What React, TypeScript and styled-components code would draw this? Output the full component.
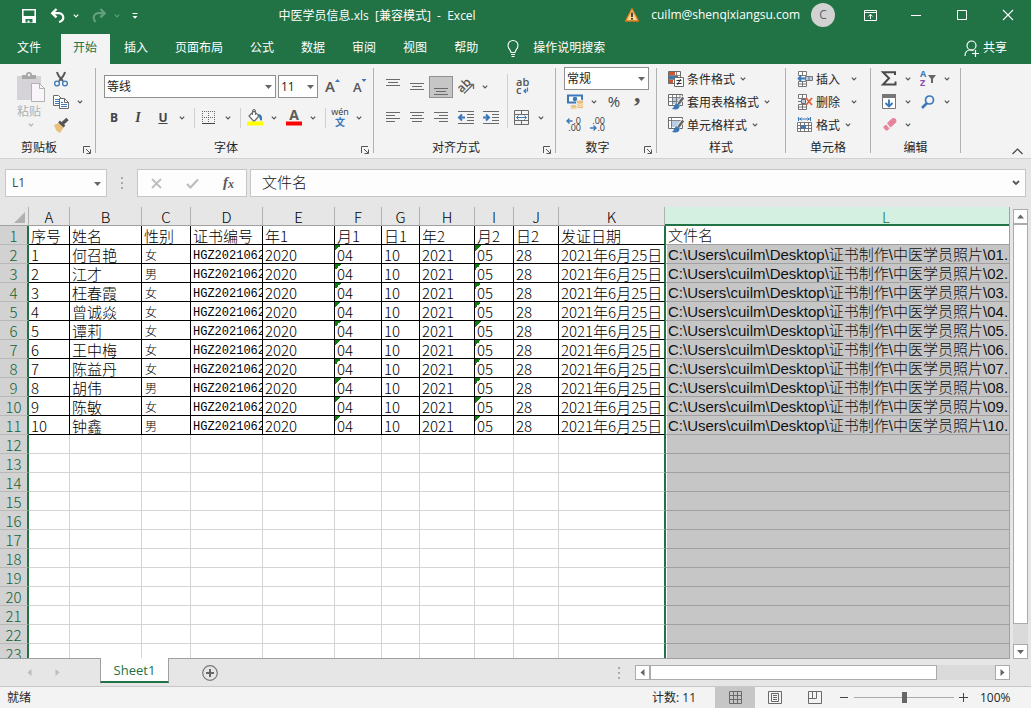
import React from "react";
import styled, { createGlobalStyle, css } from "styled-components";

const GREEN = "#217346";
const UI_FONT = `"Open Sans", "Noto Sans CJK SC", sans-serif`;
const CELL_FONT = `"Noto Sans CJK SC", sans-serif`;

const GlobalStyle = createGlobalStyle`
  *, *::before, *::after { box-sizing: border-box; }
  body { margin: 0; font: 12px/16px ${UI_FONT}; color: #262626; background: #e6e6e6; }
  button, input, select { font: inherit; color: inherit; margin: 0; padding: 0; border: 0; background: none; border-radius: 0; }
  button { cursor: pointer; white-space: nowrap; }
  svg { display: block; flex: none; overflow: visible; }
`;

/* ---------- window frame ---------- */

const Window = styled.div`
  display: flex;
  flex-direction: column;
  height: 100vh;
  overflow: hidden;
`;

const TitleBar = styled.header`
  display: flex;
  align-items: center;
  height: 34px;
  flex: none;
  padding-bottom: 4px;
  background: ${GREEN};
  color: #fff;
`;

const QuickAccess = styled.div`
  display: flex;
  align-items: center;
  gap: 5px;
  width: 140px;
  padding: 2px 0 0 20px;
`;

const QuickPair = styled.div`
  display: flex;
  align-items: center;
`;

const QuickButton = styled.button<{ $w: number; $faded?: boolean }>`
  display: flex;
  flex: none;
  justify-content: center;
  align-items: center;
  width: ${(p) => p.$w}px;
  height: 20px;
  opacity: ${(p) => (p.$faded ? 0.3 : 1)};
`;

const Title = styled.h1`
  flex: 1;
  margin: 0;
  padding: 2px 4px 0 0;
  font-size: 12px;
  font-weight: 400;
  text-align: center;
  white-space: pre;
`;

const Account = styled.div`
  display: flex;
  align-items: center;
  gap: 11px;
  padding: 0 12px 0 6px;
`;

const Avatar = styled.span`
  display: flex;
  align-items: center;
  justify-content: center;
  width: 24px;
  height: 24px;
  border-radius: 50%;
  background: #d2d2d2;
  color: #5b6470;
`;

const WindowButton = styled.button`
  display: flex;
  justify-content: center;
  align-items: center;
  width: 46px;
  height: 30px;
`;

const TabBar = styled.nav`
  display: flex;
  align-items: stretch;
  gap: 2px;
  flex: none;
  height: 30px;
  padding: 0 12px 0 5px;
  background: ${GREEN};
  color: #fff;
`;

const Tab = styled.button<{ $active?: boolean; $file?: boolean }>`
  padding: 0 13px 2px 12px;
  ${(p) => p.$file && css`margin-right: 5px;`}
  ${(p) => p.$active && css`background: #f3f3f3; color: ${GREEN};`}
`;

const TabAction = styled.button<{ $end?: boolean; $gap: number }>`
  display: flex;
  align-items: center;
  gap: ${(p) => p.$gap}px;
  padding: 0 12px 2px 14px;
  margin-left: ${(p) => (p.$end ? "auto" : "0")};
`;

/* ---------- ribbon ---------- */

const Ribbon = styled.section`
  display: flex;
  flex: none;
  height: 95px;
  background: #f3f3f3;
  border-bottom: 1px solid #d2d2d2;
`;

const GroupBox = styled.div<{ $w: number }>`
  display: flex;
  flex-direction: column;
  width: ${(p) => p.$w}px;
`;

const GroupBody = styled.div<{ $left: number }>`
  display: flex;
  height: 73px;
  padding-left: ${(p) => p.$left}px;
`;

const GroupFooter = styled.div`
  display: flex;
  height: 20px;
`;

const GroupLabel = styled.span`
  flex: 1;
  text-align: center;
  line-height: 22px;
`;

const Launcher = styled.button`
  display: flex;
  align-items: flex-end;
  justify-content: center;
  width: 17px;
  padding-bottom: 3px;
`;

const Rule = styled.div`
  width: 1px;
  margin: 4px 0 5px;
  background: #b1b1b1;
`;

const ThreeRows = styled.div`
  display: grid;
  grid-template-rows: repeat(3, 23px);
  align-items: center;
  padding-top: 3px;
`;

const TwoRows = styled.div`
  display: grid;
  grid-template-rows: repeat(2, 31px);
  align-items: center;
  padding-top: 7px;
`;

const Row = styled.div<{ $gap?: number; $left?: number }>`
  display: flex;
  align-items: center;
  gap: ${(p) => p.$gap ?? 0}px;
  padding-left: ${(p) => p.$left ?? 0}px;
`;

const Tool = styled.button<{ $w?: number; $pressed?: boolean }>`
  display: flex;
  align-items: center;
  justify-content: center;
  width: ${(p) => p.$w ?? 24}px;
  height: 22px;
  color: #444;
  ${(p) => p.$pressed && css`background: #c6c6c6; border: 1px solid #919191;`}
`;

const Italic = styled.i`
  font: italic 700 14px/16px "Liberation Serif", serif;
`;

const DropButton = styled.button`
  display: flex;
  align-items: center;
  width: 13px;
  height: 22px;
  padding-left: 3px;
`;

const LabelTool = styled.button`
  display: flex;
  align-items: center;
  gap: 3px;
  height: 22px;
`;

const ToolText = styled.span`
  padding-top: 2px;
`;

const LabelDrop = styled.span`
  padding-left: 2px;
`;

const Divider = styled.span<{ $tall?: boolean }>`
  width: 1px;
  height: ${(p) => (p.$tall ? 54 : 20)}px;
  margin: ${(p) => (p.$tall ? "10px 1px 0 4px" : "0 1px 0 5px")};
  background: #d0d0d0;
`;

const PasteButton = styled.button`
  display: flex;
  flex-direction: column;
  align-items: center;
  width: 34px;
  padding-top: 8px;
  color: #b1b1b1;
`;

const PasteLabel = styled.span`
  height: 21px;
  line-height: 20px;
  margin-right: 4px;
`;

const SelectFrame = styled.span<{ $w: number }>`
  display: grid;
  align-items: center;
  width: ${(p) => p.$w}px;
  height: 23px;
  border: 1px solid #8f8f8f;
  background: #fff;
  & > * { grid-area: 1 / 1; }
  & > svg { justify-self: end; margin-right: 3px; pointer-events: none; }
`;

const SelectField = styled.select`
  appearance: none;
  width: 100%;
  height: 21px;
  padding-left: 2px;
  color: #222;
`;

const CollapseCorner = styled.button`
  display: flex;
  align-self: flex-end;
  padding: 0 8px 3px;
`;

/* ---------- formula bar ---------- */

const FormulaBar = styled.section`
  display: flex;
  flex: none;
  height: 48px;
  padding: 10px 5px 10px 5px;
`;

const Box = styled.div<{ $w?: number }>`
  display: flex;
  align-items: center;
  ${(p) => (p.$w ? css`width: ${p.$w}px;` : css`flex: 1;`)}
  min-width: 0;
  border: 1px solid #c6c6c6;
  background: #fdfdfd;
`;

const NameInput = styled.input`
  flex: 1;
  min-width: 0;
  padding-left: 6px;
  color: #444;
`;

const FormulaInput = styled.input`
  flex: 1;
  min-width: 0;
  padding: 0 0 3px 11px;
  font: 15px/20px ${CELL_FONT};
  font-weight: 300;
  color: #111;
`;

const FxButton = styled.button`
  display: flex;
  align-items: center;
  justify-content: center;
  flex: 1;
  height: 26px;
`;

const ArrowButton = styled.button`
  display: flex;
  align-items: center;
  justify-content: center;
  width: 18px;
  height: 26px;
`;

const Grip = styled.span<{ $w: number }>`
  display: flex;
  align-items: center;
  justify-content: center;
  width: ${(p) => p.$w}px;
`;

/* ---------- worksheet ---------- */

const SheetArea = styled.main`
  display: flex;
  flex: 1;
  min-height: 0;
  gap: 3px;
  padding-right: 3px;
`;

const GridView = styled.div`
  flex: 1;
  min-width: 0;
  overflow: hidden;
  border-right: 1px solid #a0a0a0;
  border-bottom: 1px solid #a0a0a0;
`;

const Sheet = styled.table`
  width: 1108px;
  table-layout: fixed;
  border-collapse: separate;
  border-spacing: 0;
  font: 15px/16px ${CELL_FONT};
  font-weight: 300;
`;

const Corner = styled.td`
  height: 19px;
  padding: 0;
  border-right: 1px solid #b1b1b1;
  border-bottom: 1px solid #a0a0a0;
  background: #e6e6e6;
  & > svg { margin-left: auto; margin-right: 3px; margin-top: 3px; }
`;

const ColHead = styled.th<{ $selected?: boolean }>`
  height: 19px;
  padding: 2px 0 0;
  overflow: hidden;
  font-weight: 300;
  color: #000;
  border-right: 1px solid #b1b1b1;
  border-bottom: 1px solid #a0a0a0;
  background: #e6e6e6;
  ${(p) =>
    p.$selected &&
    css`
      line-height: 15px;
      color: ${GREEN};
      background: #d3f0e0;
      border-right-color: #d3f0e0;
      border-bottom: 2px solid ${GREEN};
    `}
`;

const RowHead = styled.th`
  height: 19px;
  padding: 2px 0 0;
  font-weight: 300;
  color: #0f6335;
  background: #d2d2d2;
  border-right: 2px solid ${GREEN};
  border-bottom: 1px solid #b8b8b8;
`;

type CellKind = "plain" | "mono" | "small";

const Cell = styled.td<{ $filled?: boolean; $kind?: CellKind; $flag?: boolean; $last?: boolean }>`
  height: 19px;
  padding: 2px 0 0 2px;
  overflow: hidden;
  white-space: nowrap;
  background-color: #fff;
  color: #000;
  border-right: 1px solid ${(p) => (p.$filled ? "#000" : "#d4d4d4")};
  border-bottom: 1px solid ${(p) => (p.$filled ? "#000" : "#d4d4d4")};
  ${(p) => p.$last && css`border-right-color: ${GREEN};`}
  ${(p) => p.$kind === "mono" && css`padding-top: 4px; font: 12px/14px "Liberation Mono", monospace;`}
  ${(p) => p.$kind === "small" && css`padding-left: 3px; font-size: 12px;`}
  ${(p) =>
    p.$flag &&
    css`
      background-image: linear-gradient(135deg, #0b7d0b 50%, transparent 50%);
      background-size: 6px 6px;
      background-repeat: no-repeat;
    `}
`;

const SelectedCell = styled.td<{ $current?: boolean }>`
  height: 19px;
  padding: 2px 0 0 2px;
  overflow: hidden;
  white-space: nowrap;
  font-family: "Liberation Sans", "Noto Sans CJK SC", sans-serif;
  color: #111;
  background: ${(p) => (p.$current ? "#fff" : "#c6c6c6")};
  border-left: 1px solid ${GREEN};
  border-bottom: 1px solid #a0a0a0;
  box-shadow: inset 1px 0 #fff;
`;

const VScroll = styled.div`
  display: flex;
  flex-direction: column;
  width: 15px;
  padding-top: 2px;
`;

const HScroll = styled.div`
  display: flex;
  flex: 0 1 375px;
  height: 15px;
`;

const ScrollButton = styled.button`
  display: flex;
  align-items: center;
  justify-content: center;
  flex: none;
  width: 15px;
  height: 15px;
  border: 1px solid #ababab;
  background: #fff;
`;

const ScrollThumb = styled.div<{ $share: number }>`
  flex: ${(p) => p.$share} 1 0;
  border: 1px solid #ababab;
  background: #fff;
`;

const ScrollTrack = styled.div<{ $share: number }>`
  flex: ${(p) => p.$share} 1 0;
  background: #dadada;
`;

/* ---------- sheet tabs and status bar ---------- */

const SheetBar = styled.div`
  display: flex;
  align-items: center;
  flex: none;
  height: 27px;
  padding: 0 21px 0 15px;
`;

const NavButton = styled.button`
  display: flex;
  align-items: center;
  justify-content: center;
  width: 28px;
  height: 20px;
`;

const SheetTab = styled.button`
  position: relative;
  align-self: flex-start;
  width: 69px;
  height: 25px;
  margin: -1px 0 0 29px;
  font-size: 13px;
  color: ${GREEN};
  background: #fff;
  border-left: 1px solid #a0a0a0;
  border-right: 1px solid #a0a0a0;
  border-bottom: 2px solid ${GREEN};
`;

const AddSheet = styled.button`
  display: flex;
  margin-left: 33px;
`;

const Stretch = styled.span`
  flex: 1;
`;

const StatusBar = styled.footer`
  display: flex;
  align-items: center;
  flex: none;
  height: 22px;
  padding: 0 19px 0 7px;
  background: #f3f3f3;
  border-top: 1px solid #c8c8c8;
`;

const Count = styled.span`
  margin-right: 19px;
`;

const ViewButton = styled.button<{ $active?: boolean }>`
  display: flex;
  align-items: center;
  justify-content: center;
  width: 40px;
  height: 21px;
  background: ${(p) => (p.$active ? "#c6c6c6" : "transparent")};
`;

const ZoomButton = styled.button`
  display: flex;
  align-items: center;
  justify-content: center;
  width: 19px;
  height: 21px;
`;

const ZoomRange = styled.input`
  appearance: none;
  width: 100px;
  height: 11px;
  background: linear-gradient(#ababab, #ababab) center / 100% 1px no-repeat;
  &::-webkit-slider-thumb {
    appearance: none;
    width: 5px;
    height: 11px;
    background: #666;
  }
`;

const ZoomValue = styled.button`
  width: 32px;
  margin-left: 7px;
  text-align: left;
`;

/* ---------- icons ---------- */

const G = "#6a6a6a";
const B = "#3b78b8";
const O = "#eabf7d";

type IconProps = { w?: number; h?: number; children: React.ReactNode };
const Icon = ({ w = 16, h = 16, children }: IconProps) => (
  <svg width={w} height={h} viewBox={`0 0 ${w} ${h}`} fill="none" aria-hidden="true">
    {children}
  </svg>
);

const Chevron = ({ color = "#555" }: { color?: string }) => (
  <Icon w={6} h={4}>
    <path d="M.8 .7 3 2.9 5.2 .7" stroke={color} strokeWidth="1.2" />
  </Icon>
);

const Triangle = ({ dir = "down", color = "#666" }: { dir?: "down" | "up" | "left" | "right"; color?: string }) => {
  const d = {
    down: "M0 2h7L3.500 6z",
    up: "M0 5.500h7L3.500 1.500z",
    left: "M5.500 0v7L1.500 3.500z",
    right: "M1.500 0v7L5.500 3.500z",
  }[dir];
  return (
    <Icon w={7} h={7}>
      <path d={d} fill={color} />
    </Icon>
  );
};

const SaveIcon = () => (
  <Icon>
    <path d="M1.800 1.800h12.400v12.400H1.800z" stroke="#fff" strokeWidth="1.600" />
    <path d="M2 8h12v6H2z" fill="#fff" />
    <path d="M4.500 11h7v3.500h-7z" fill={GREEN} />
    <path d="M6.500 12.500h2v2h-2z" fill="#fff" />
  </Icon>
);

const UndoIcon = () => (
  <Icon>
    <path d="M6.500 1 2.300 5.200l4.200 4.200" stroke="#fff" strokeWidth="2.400" />
    <path d="M2.500 5.200H9a4.300 4.300 0 0 1 4.300 4.300c0 2.300-1.600 3.800-4.300 4.500" stroke="#fff" strokeWidth="2.200" />
  </Icon>
);

const RedoIcon = () => (
  <Icon>
    <path d="m9.500 1 4.200 4.200-4.200 4.200" stroke="#fff" strokeWidth="2.400" />
    <path d="M13.500 5.200H7a4.300 4.300 0 0 0-4.300 4.300c0 1.800.8 3.300 1.800 4.500" stroke="#fff" strokeWidth="2.200" />
  </Icon>
);

const CustomizeIcon = () => (
  <Icon w={6} h={8}>
    <path d="M.5 1.500h5" stroke="#fff" />
    <path d="M.5 4h5L3 6.800z" fill="#fff" />
  </Icon>
);

const WarningIcon = () => (
  <Icon>
    <path d="M8 1.500 14.500 14h-13z" fill="#f8d58b" stroke="#d8761b" strokeWidth="1.300" strokeLinejoin="round" />
    <path d="M8 5.500v4.500M8 11v1.800" stroke="#222" strokeWidth="1.600" />
  </Icon>
);

const RibbonOptionsIcon = () => (
  <Icon w={13} h={11}>
    <path d="M.5 .5h12v10H.5zM.5 2.500h12M6.500 9V4.500M4.300 6.500l2.200-2.200 2.200 2.200" stroke="#fff" />
  </Icon>
);

const MinimizeIcon = () => (
  <Icon w={10} h={10}>
    <path d="M0 5.500h10" stroke="#fff" />
  </Icon>
);

const MaximizeIcon = () => (
  <Icon w={10} h={10}>
    <path d="M.5 .5h9v9h-9z" stroke="#fff" />
  </Icon>
);

const CloseIcon = () => (
  <Icon w={10} h={10}>
    <path d="m0 0 10 10M10 0 0 10" stroke="#fff" strokeWidth="1.100" />
  </Icon>
);

const BulbIcon = () => (
  <Icon w={12} h={17}>
    <path d="M4 12.500c0-2.500-3-3.500-3-7a5 5 0 0 1 10 0c0 3.500-3 4.500-3 7zM4 14.500h4M4.500 16.500h3" stroke="#fff" strokeWidth="1.100" />
  </Icon>
);

const ShareIcon = () => (
  <Icon w={15} h={17}>
    <path d="M1 16c0-4 2-6 5.500-6 1.500 0 2.500.4 3 .9" stroke="#fff" strokeWidth="1.200" />
    <circle cx="7.500" cy="5.500" r="4.500" stroke="#fff" strokeWidth="1.200" />
    <path d="M8 13.500h7M11.500 10v7" stroke="#fff" strokeWidth="1.200" />
  </Icon>
);

const PasteIcon = () => (
  <Icon w={28} h={30}>
    <path d="M0 4h24v24H0z" fill="#d6d3d8" />
    <path d="M5 3h4a3 3 0 0 1 6 0h4v4H5z" fill="#a8a8a8" />
    <circle cx="12" cy="3" r="1.200" fill="#f3f3f3" />
    <path d="M14.500 11.500h8l5 5v13h-13z" fill="#faf5fb" stroke="#b1b1b1" />
    <path d="M22.500 11.500v5h5" stroke="#b1b1b1" />
  </Icon>
);

const CutIcon = () => (
  <Icon>
    <path d="M4 1c1 4 3 6 6 9M12 1c-1 4-3 6-6 9" stroke="#555" strokeWidth="2" />
    <circle cx="4" cy="12.500" r="2.400" stroke={B} strokeWidth="1.300" />
    <circle cx="12" cy="12.500" r="2.400" stroke={B} strokeWidth="1.300" />
  </Icon>
);

const CopyIcon = () => (
  <Icon>
    <path d="M.500 1.500h5l3 3v7h-8z" fill="#fff" stroke={G} />
    <path d="M2 5.500h4M2 7.500h4M2 9.500h4" stroke={B} />
    <path d="M6.500 4.500h5l4 4v6h-9z" fill="#fff" stroke={G} />
    <path d="M11.500 4.500v4h4" stroke={G} />
    <path d="M8 8.500h2M8 10.500h6M8 12.500h6" stroke={B} />
  </Icon>
);

const BrushIcon = () => (
  <Icon>
    <path d="m1 8 5-2 5 4-4 6-2-1-1-1-1-1z" fill={O} />
    <path d="m6 4.500 5.500 5" stroke="#555" strokeWidth="2.500" />
    <path d="m9 7 5.500-5" stroke="#555" strokeWidth="3.500" />
  </Icon>
);

const LauncherIcon = () => (
  <Icon w={8} h={8}>
    <path d="M.500 7V.500H7M3 3l4 4M7.500 3.500v4h-4" stroke="#555" />
  </Icon>
);

const FontSizeIcon = ({ grow }: { grow?: boolean }) => (
  <Icon>
    <text x={grow ? 0 : 1} y="13" fontSize={grow ? 15 : 13} fontWeight="600" fill="#555">A</text>
    <path d={grow ? "M10 3h5l-2.500-3z" : "M9.500 0h5L12 3z"} fill={B} />
  </Icon>
);

const BorderIcon = () => (
  <Icon w={14} h={14}>
    <path d="M.500 0v12M6.500 0v12M12.500 0v12M0 .500h13M0 6.500h13" stroke={G} strokeDasharray="1 1" />
    <path d="M0 12.500h13" stroke="#444" />
  </Icon>
);

const FillIcon = () => (
  <Icon w={16} h={17}>
    <path d="M2 7 7 2l5 5-5 5.500z" fill="#fff" stroke={G} strokeWidth="1.200" />
    <path d="M5.500 6V2a1.500 1.500 0 0 1 3 0v4" stroke={G} />
    <path d="M11 5c3 0 4.500 2 4 6-1 1-2 .5-2-.5z" fill={B} />
    <path d="M0 12.500h16v4H0z" fill="#ff0" />
  </Icon>
);

const FontColorIcon = () => (
  <Icon w={16} h={17}>
    <text x="8" y="11" fontSize="14" fontWeight="700" textAnchor="middle" fill="#5a5a5a">A</text>
    <path d="M0 12.500h16v4H0z" fill="#f00" />
  </Icon>
);

const PhoneticIcon = () => (
  <Icon w={18} h={18}>
    <text x="9" y="6" fontSize="9" textAnchor="middle" fill="#333">wén</text>
    <text x="9" y="17" fontSize="10" fontWeight="700" textAnchor="middle" fill={B}>文</text>
  </Icon>
);

const LinesIcon = ({ rows, y = 0 }: { rows: [number, number][]; y?: number }) => (
  <Icon w={14} h={16}>
    {rows.map(([x, w], i) => (
      <path key={i} d={`M${x} ${y + i * 3 + 0.5}h${w}`} stroke={G} />
    ))}
  </Icon>
);

const OrientationIcon = () => (
  <Icon w={17} h={17}>
    <text x="1" y="13" fontSize="12" fontWeight="600" fill="#555" transform="rotate(-45 5 11)">ab</text>
    <path d="m6 15.500 9-9M11 6.500h4.500V11" stroke={G} strokeWidth="1.300" />
  </Icon>
);

const WrapIcon = () => (
  <Icon w={14} h={18}>
    <text x="1" y="8" fontSize="11" fontWeight="600" fill="#555">ab</text>
    <text x="1" y="16" fontSize="11" fontWeight="600" fill="#555">c</text>
    <path d="M12.500 9.500v3.500H9M11 11l-2 2 2 2" stroke={B} strokeWidth="1.200" />
  </Icon>
);

const IndentIcon = ({ out }: { out?: boolean }) => (
  <Icon>
    <path d="M0 1.500h16M9 4.500h7M9 7.500h7M9 10.500h7M0 13.500h16" stroke={G} />
    <path
      d={out ? "M7 7.500H1.500M4 4.500l-3 3 3 3" : "M0 7.500h5.500M3 4.500l3 3-3 3"}
      stroke={B}
      strokeWidth="2"
    />
  </Icon>
);

const MergeIcon = () => (
  <Icon>
    <path d="M.500 .500h14v14H.500zM.500 4.500h14M.500 10.500h14M7.500 .500v4M7.500 10.500v4" stroke={G} />
    <path d="M3 7.500h9M4.500 5.500l-2 2 2 2M10.500 5.500l2 2-2 2" stroke={B} />
  </Icon>
);

const CurrencyIcon = () => (
  <Icon w={17} h={16}>
    <path d="M1 1.500h14v7H1z" fill="#fff" stroke={B} strokeWidth="2" />
    <circle cx="8" cy="5" r="2.300" fill={B} />
    <path d="M9.500 7.500c0-2 7-2 7 0v6c0 1.500-7 1.500-7 0z" fill={O} stroke="#f3f3f3" strokeWidth=".8" />
    <path d="M3.500 12c0-1.800 6.500-1.800 6.500 0v2.500c0 1.500-6.500 1.500-6.500 0z" fill={O} stroke="#f3f3f3" strokeWidth=".8" />
    <path d="M10 9.500c1 1 5 1 6 0M10 11.500c1 1 5 1 6 0M4 13.500c1 1 5 1 6 0" stroke="#fff" strokeWidth=".7" />
  </Icon>
);

const DecimalIcon = ({ more }: { more?: boolean }) => (
  <Icon w={16} h={16}>
    <text x="15" y="7" fontSize="9" textAnchor="end" fill="#333">{more ? ".0" : ".00"}</text>
    <text x="15" y="14" fontSize="9" textAnchor="end" fill="#333">{more ? ".00" : ".0"}</text>
    <path
      d={more ? "M6.500 4H1M3.500 1.500 1 4l2.500 2.500" : "M0 11h5.500M3.500 8.500 6 11l-2.500 2.500"}
      stroke={B}
      strokeWidth="1.400"
    />
  </Icon>
);

const CondFormatIcon = () => (
  <Icon>
    <path d="M.500 .500h12v12H.500z" fill="#fff" stroke={G} />
    <path d="M1 1h6v3H1zM1 9h4v3H1z" fill="#d35230" />
    <path d="M1 5h9v3H1z" fill={B} />
    <path d="M.500 4.500h12M.500 8.500h6M8.500 .500v6" stroke={G} strokeWidth=".8" />
    <path d="M6.500 6.500h9v9h-9z" fill="#fff" stroke={G} />
    <path d="M8.500 9.500h5M8.500 12.500h5M12.500 8l-3 6" stroke="#333" />
  </Icon>
);

const StyleIcon = ({ grid }: { grid?: boolean }) => (
  <Icon>
    <path d="M.500 .500h14v11H.500z" fill="#fff" stroke={G} />
    <path d={grid ? "M4 4h8v6H4z" : "M3 4h9v6H3z"} fill="#b9cde4" />
    <path d={grid ? "M.500 3.500h14M.500 7.500h14M4.500 .500v11M8.500 .500v11M12 .500v11" : "M.500 3.500h14M3.500 .500v11"} stroke={G} strokeWidth=".8" />
    <path d="M15.500 3 10 10.500" stroke="#f3f3f3" strokeWidth="4" />
    <path d="M15.200 3.500 10.500 10" stroke="#666" strokeWidth="2.500" />
    <path d="M8 9.500c2-.5 4 1.500 3.500 3.500-1 2.500-4 3-7.500 2 2-1 2-4.500 4-5.500z" fill={B} />
  </Icon>
);

const CellsIcon = ({ remove }: { remove?: boolean }) => (
  <Icon>
    <path d="M1.500 .500h8v4h-8zM5.500 .500v4M1.500 10.500h8v5h-8zM5.500 10.500v5M1.500 13h8" fill="#fff" stroke={G} strokeWidth=".9" />
    {remove ? (
      <>
        <path d="M1 7.500h3" stroke={G} />
        <path d="M4.500 5.500h4v4h-4z" fill="#b9cde4" stroke={G} />
        <path d="m9 4 6 7M15 4l-6 7" stroke="#e0603c" strokeWidth="1.800" />
      </>
    ) : (
      <>
        <path d="M8.500 5.500h7v4h-7zM12 5.500v4" fill="#b9cde4" stroke={G} strokeWidth=".9" />
        <path d="M8 7.500H1.500M4 5 1.500 7.500 4 10" stroke={B} strokeWidth="1.800" />
      </>
    )}
  </Icon>
);

const FormatIcon = () => (
  <Icon>
    <path d="M1.500 0v4M13.500 0v4M2 2h11M4.500 .500 3 2l1.500 1.500M10.500 .500 12 2l-1.500 1.500" stroke={B} />
    <path d="M.500 5.500h14v9H.500zM.500 8.500h14M.500 11.500h14M3.500 5.500v9M11.500 5.500v9M7.500 5.500v9" fill="#fff" stroke={G} strokeWidth=".9" />
    <path d="M4 8.500h5v3.500H4z" fill={B} />
  </Icon>
);

const SumIcon = () => (
  <Icon w={16} h={15}>
    <path d="M14 4V1.200H2l6 6-6 6.300h12.500V10.500" stroke="#4a4a4a" strokeWidth="2" />
  </Icon>
);

const FillDownIcon = () => (
  <Icon w={15} h={16}>
    <path d="M.500 .500h13v14H.500z" fill="#fff" stroke="#777" />
    <path d="M0 0h14v4H0z" fill="#777" />
    <path d="M7 5.500V12M3.500 9 7 12.500 10.500 9" stroke={B} strokeWidth="1.900" />
  </Icon>
);

const EraserIcon = () => (
  <Icon w={15} h={15}>
    <path d="m5.500 6 5-4.500 3 .5.500 3L8.500 10z" fill="#e6849a" stroke="#e6849a" strokeLinejoin="round" />
    <path d="m4 7.500 3.500 4-2 2H4L1.500 11V9.500z" fill="#e6849a" />
  </Icon>
);

const SortIcon = () => (
  <Icon w={17} h={17}>
    <text x="0" y="7" fontSize="9" fontWeight="700" fill={B}>A</text>
    <text x="0" y="16" fontSize="9" fontWeight="700" fill="#8a4fae">Z</text>
    <path d="M8 5h8l-3 4v4h-2V9z" fill="#666" />
  </Icon>
);

const FindIcon = () => (
  <Icon w={14} h={14}>
    <circle cx="8.500" cy="5" r="4" stroke={B} strokeWidth="1.700" />
    <path d="M6 8 1 13" stroke={B} strokeWidth="2.600" />
  </Icon>
);

const CollapseIcon = () => (
  <Icon w={11} h={7}>
    <path d="M.500 6 5.500 1l5 5" stroke="#444" strokeWidth="1.200" />
  </Icon>
);

const GripIcon = () => (
  <Icon w={2} h={12}>
    <path d="M0 1h2M0 6h2M0 11h2" stroke="#aaa" strokeWidth="2" />
  </Icon>
);

const CancelIcon = () => (
  <Icon w={11} h={11}>
    <path d="m1 1 9 9M10 1l-9 9" stroke="#bdbdbd" strokeWidth="1.800" />
  </Icon>
);

const EnterIcon = () => (
  <Icon w={13} h={11}>
    <path d="m1 6 3.500 3.500L12 1.500" stroke="#bdbdbd" strokeWidth="2.200" />
  </Icon>
);

const FxIcon = () => (
  <Icon w={12} h={16}>
    <text x="1" y="12" fontSize="15" fontStyle="italic" fontWeight="700" fontFamily="Liberation Serif, serif" fill="#5a5a5a">f</text>
    <text x="6" y="13" fontSize="12" fontStyle="italic" fontWeight="700" fontFamily="Liberation Serif, serif" fill="#5a5a5a">x</text>
  </Icon>
);

const AddIcon = () => (
  <Icon w={16} h={16}>
    <circle cx="8" cy="8" r="7.300" stroke="#777" strokeWidth="1.200" />
    <path d="M4 8h8M8 4v8" stroke="#666" strokeWidth="2" />
  </Icon>
);

const NormalViewIcon = () => (
  <Icon w={13} h={13}>
    <path d="M.500 .500h12v12H.500zM.500 4.500h12M.500 8.500h12M4.500 .500v12M8.500 .500v12" stroke={G} />
  </Icon>
);

const PageLayoutIcon = () => (
  <Icon w={14} h={13}>
    <path d="M.500 .500h13v12H.500zM3.500 2.500h7v8h-7zM5 4.500h4M5 6.500h4M5 8.500h4" stroke={G} />
  </Icon>
);

const PageBreakIcon = () => (
  <Icon w={14} h={13}>
    <path d="M.500 .500h13v12H.500zM.500 7.500h8v-7M4.500 .500v7" stroke={G} />
  </Icon>
);

/* ---------- composed parts ---------- */

const Split = ({ label, children }: { label: string; children: React.ReactNode }) => (
  <>
    <Tool $w={26} aria-label={label}>{children}</Tool>
    <DropButton aria-label={`${label} 选项`}><Chevron /></DropButton>
  </>
);

const Combo = ({ label, value, w }: { label: string; value: string; w: number }) => (
  <SelectFrame $w={w}>
    <SelectField aria-label={label} defaultValue={value}>
      <option>{value}</option>
    </SelectField>
    <Triangle />
  </SelectFrame>
);

type GroupProps = { label: string; w: number; left?: number; launcher?: boolean; children: React.ReactNode };
const Group = ({ label, w, left = 0, launcher, children }: GroupProps) => (
  <>
    <GroupBox $w={w}>
      <GroupBody $left={left}>{children}</GroupBody>
      <GroupFooter>
        <GroupLabel>{label}</GroupLabel>
        {launcher && <Launcher aria-label={`${label}设置`}><LauncherIcon /></Launcher>}
      </GroupFooter>
    </GroupBox>
    <Rule />
  </>
);

const MenuTool = ({ icon, label }: { icon: React.ReactNode; label: string }) => (
  <LabelTool>
    {icon}
    <ToolText>{label}</ToolText>
    <LabelDrop><Chevron /></LabelDrop>
  </LabelTool>
);

const SplitLabelTool = ({ icon, label }: { icon: React.ReactNode; label: string }) => (
  <Row $gap={8}>
    <LabelTool>
      {icon}
      <ToolText>{label}</ToolText>
    </LabelTool>
    <DropButton aria-label={`${label}选项`}><Chevron /></DropButton>
  </Row>
);

/* ---------- data ---------- */

const MENU = ["插入", "页面布局", "公式", "数据", "审阅", "视图", "帮助"];

const COLUMNS: { id: string; w: number }[] = [
  { id: "A", w: 41 },
  { id: "B", w: 72 },
  { id: "C", w: 49 },
  { id: "D", w: 72 },
  { id: "E", w: 72 },
  { id: "F", w: 47 },
  { id: "G", w: 38 },
  { id: "H", w: 55 },
  { id: "I", w: 39 },
  { id: "J", w: 45 },
  { id: "K", w: 106 },
  { id: "L", w: 443 },
];

const HEADINGS = ["序号", "姓名", "性别", "证书编号", "年1", "月1", "日1", "年2", "月2", "日2", "发证日期"];

const STUDENTS: [string, string][] = [
  ["何召艳", "女"],
  ["江才", "男"],
  ["枉春霞", "女"],
  ["曾诚焱", "女"],
  ["谭莉", "女"],
  ["王中梅", "女"],
  ["陈益丹", "女"],
  ["胡伟", "男"],
  ["陈敏", "女"],
  ["钟鑫", "男"],
];

const RECORDS = STUDENTS.map(([name, sex], i) => ({
  cells: [String(i + 1), name, sex, "HGZ2021062", "2020", "04", "10", "2021", "05", "28", "2021年6月25日"],
  file: `C:\\Users\\cuilm\\Desktop\\证书制作\\中医学员照片\\${String(i + 1).padStart(2, "0")}.`,
}));

const KINDS: Record<number, CellKind> = { 2: "small", 3: "mono" };
const FLAGGED = [5, 8];
const EMPTY_ROWS = Array.from({ length: 12 }, (_, i) => i + 12);

export default function App() {
  return (
    <Window>
      <GlobalStyle />
      <TitleBar>
        <QuickAccess>
          <QuickButton $w={18} aria-label="保存"><SaveIcon /></QuickButton>
          <QuickPair>
            <QuickButton $w={30} aria-label="撤消"><UndoIcon /></QuickButton>
            <QuickButton $w={6} aria-label="撤消列表"><Chevron color="#fff" /></QuickButton>
          </QuickPair>
          <QuickPair>
            <QuickButton $w={30} $faded aria-label="恢复"><RedoIcon /></QuickButton>
            <QuickButton $w={6} $faded aria-label="恢复列表"><Chevron color="#fff" /></QuickButton>
          </QuickPair>
          <QuickButton $w={20} aria-label="自定义快速访问工具栏"><CustomizeIcon /></QuickButton>
        </QuickAccess>
        <Title>中医学员信息.xls  [兼容模式]  -  Excel</Title>
        <Account>
          <WarningIcon />
          <span>cuilm@shenqixiangsu.com</span>
          <Avatar>C</Avatar>
        </Account>
        <WindowButton aria-label="功能区显示选项"><RibbonOptionsIcon /></WindowButton>
        <WindowButton aria-label="最小化"><MinimizeIcon /></WindowButton>
        <WindowButton aria-label="最大化"><MaximizeIcon /></WindowButton>
        <WindowButton aria-label="关闭"><CloseIcon /></WindowButton>
      </TitleBar>

      <TabBar>
        <Tab $file>文件</Tab>
        <Tab $active>开始</Tab>
        {MENU.map((m) => <Tab key={m}>{m}</Tab>)}
        <TabAction $gap={14}><BulbIcon />操作说明搜索</TabAction>
        <TabAction $gap={4} $end><ShareIcon />共享</TabAction>
      </TabBar>

      <Ribbon>
        <Group label="剪贴板" w={95} left={14} launcher>
          <PasteButton>
            <PasteIcon />
            <PasteLabel>粘贴</PasteLabel>
            <Chevron color="#b1b1b1" />
          </PasteButton>
          <ThreeRows>
            <Tool $w={26} aria-label="剪切"><CutIcon /></Tool>
            <Row><Split label="复制"><CopyIcon /></Split></Row>
            <Tool $w={26} aria-label="格式刷"><BrushIcon /></Tool>
          </ThreeRows>
        </Group>

        <Group label="字体" w={277} left={6} launcher>
          <TwoRows>
            <Row $gap={2} $left={2}>
              <Combo label="字体" value="等线" w={172} />
              <Combo label="字号" value="11" w={40} />
              <Tool $w={26} aria-label="增大字号"><FontSizeIcon grow /></Tool>
              <Tool aria-label="减小字号"><FontSizeIcon /></Tool>
            </Row>
            <Row>
              <Tool aria-label="加粗"><b>B</b></Tool>
              <Tool aria-label="倾斜"><Italic>I</Italic></Tool>
              <Split label="下划线"><b><u>U</u></b></Split>
              <Divider />
              <Split label="边框"><BorderIcon /></Split>
              <Divider />
              <Split label="填充颜色"><FillIcon /></Split>
              <Split label="字体颜色"><FontColorIcon /></Split>
              <Divider />
              <Split label="拼音字段"><PhoneticIcon /></Split>
            </Row>
          </TwoRows>
        </Group>

        <Group label="对齐方式" w={181} left={7} launcher>
          <TwoRows>
            <Row>
              <Tool aria-label="顶端对齐"><LinesIcon y={0} rows={[[0, 14], [2, 10], [0, 14]]} /></Tool>
              <Tool aria-label="垂直居中"><LinesIcon y={4} rows={[[0, 14], [2, 10], [0, 14]]} /></Tool>
              <Tool aria-label="底端对齐" $pressed><LinesIcon y={9} rows={[[0, 14], [2, 10], [0, 14]]} /></Tool>
              <Split label="方向"><OrientationIcon /></Split>
            </Row>
            <Row>
              <Tool aria-label="左对齐"><LinesIcon y={2} rows={[[0, 14], [0, 9], [0, 14], [0, 9]]} /></Tool>
              <Tool aria-label="居中"><LinesIcon y={2} rows={[[0, 14], [2, 10], [0, 14], [2, 10]]} /></Tool>
              <Tool aria-label="右对齐"><LinesIcon y={2} rows={[[0, 14], [5, 9], [0, 14], [5, 9]]} /></Tool>
              <Tool $w={26} aria-label="减少缩进量"><IndentIcon out /></Tool>
              <Tool aria-label="增加缩进量"><IndentIcon /></Tool>
            </Row>
          </TwoRows>
          <Divider $tall />
          <TwoRows>
            <Tool $w={26} aria-label="自动换行"><WrapIcon /></Tool>
            <Row><Split label="合并后居中"><MergeIcon /></Split></Row>
          </TwoRows>
        </Group>

        <Group label="数字" w={100} left={6} launcher>
          <ThreeRows>
            <Row $left={2}><Combo label="数字格式" value="常规" w={85} /></Row>
            <Row>
              <Split label="会计数字格式"><CurrencyIcon /></Split>
              <Tool $w={26} aria-label="百分比样式">
                <Icon><text x="8" y="13" fontSize="15" textAnchor="middle" fill="#444">%</text></Icon>
              </Tool>
              <Tool $w={22} aria-label="千位分隔样式">
                <Icon w={8} h={16}><text x="0" y="8" fontSize="26" fontWeight="700" fontFamily="Liberation Serif, serif" fill="#555">,</text></Icon>
              </Tool>
            </Row>
            <Row>
              <Tool aria-label="增加小数位数"><DecimalIcon more /></Tool>
              <Tool aria-label="减少小数位数"><DecimalIcon /></Tool>
            </Row>
          </ThreeRows>
        </Group>

        <Group label="样式" w={128} left={11}>
          <ThreeRows>
            <MenuTool icon={<CondFormatIcon />} label="条件格式" />
            <MenuTool icon={<StyleIcon grid />} label="套用表格格式" />
            <MenuTool icon={<StyleIcon />} label="单元格样式" />
          </ThreeRows>
        </Group>

        <Group label="单元格" w={84} left={11}>
          <ThreeRows>
            <SplitLabelTool icon={<CellsIcon />} label="插入" />
            <SplitLabelTool icon={<CellsIcon remove />} label="删除" />
            <MenuTool icon={<FormatIcon />} label="格式" />
          </ThreeRows>
        </Group>

        <Group label="编辑" w={89} left={5}>
          <ThreeRows>
            <Row>
              <Split label="自动求和"><SumIcon /></Split>
              <Split label="排序和筛选"><SortIcon /></Split>
            </Row>
            <Row>
              <Split label="填充"><FillDownIcon /></Split>
              <Split label="查找和选择"><FindIcon /></Split>
            </Row>
            <Row><Split label="清除"><EraserIcon /></Split></Row>
          </ThreeRows>
        </Group>
        <Stretch />
        <CollapseCorner aria-label="折叠功能区"><CollapseIcon /></CollapseCorner>
      </Ribbon>

      <FormulaBar>
        <Box $w={102}>
          <NameInput aria-label="名称框" defaultValue="L1" />
          <ArrowButton aria-label="名称列表"><Triangle /></ArrowButton>
        </Box>
        <Grip $w={30}><GripIcon /></Grip>
        <Box $w={110}>
          <FxButton aria-label="取消"><CancelIcon /></FxButton>
          <FxButton aria-label="输入"><EnterIcon /></FxButton>
          <FxButton aria-label="插入函数"><FxIcon /></FxButton>
        </Box>
        <Grip $w={3} />
        <Box>
          <FormulaInput aria-label="编辑栏" defaultValue="文件名" />
          <ArrowButton aria-label="展开编辑栏">
            <Icon w={8} h={6}><path d="m1 1 3 3 3-3" stroke="#555" strokeWidth="1.800" /></Icon>
          </ArrowButton>
        </Box>
      </FormulaBar>

      <SheetArea>
        <GridView>
          <Sheet>
            <colgroup>
              <col width={29} />
              {COLUMNS.map((c) => <col key={c.id} width={c.w} />)}
            </colgroup>
            <thead>
              <tr>
                <Corner><Icon w={11} h={11}><path d="M11 0v11H0z" fill="#b1b1b1" /></Icon></Corner>
                {COLUMNS.map((c) => (
                  <ColHead key={c.id} scope="col" $selected={c.id === "L"}>{c.id}</ColHead>
                ))}
              </tr>
            </thead>
            <tbody>
              <tr>
                <RowHead scope="row">1</RowHead>
                {HEADINGS.map((h, i) => (
                  <Cell key={h} $filled $last={i === 10}>{h}</Cell>
                ))}
                <SelectedCell $current>文件名</SelectedCell>
              </tr>
              {RECORDS.map((r, n) => (
                <tr key={n}>
                  <RowHead scope="row">{n + 2}</RowHead>
                  {r.cells.map((v, i) => (
                    <Cell key={i} $filled $kind={KINDS[i]} $flag={FLAGGED.includes(i)} $last={i === 10}>{v}</Cell>
                  ))}
                  <SelectedCell>{r.file}</SelectedCell>
                </tr>
              ))}
              {EMPTY_ROWS.map((n) => (
                <tr key={n}>
                  <RowHead scope="row">{n}</RowHead>
                  {HEADINGS.map((h, i) => <Cell key={h} $last={i === 10} />)}
                  <SelectedCell />
                </tr>
              ))}
            </tbody>
          </Sheet>
        </GridView>
        <VScroll>
          <ScrollButton aria-label="向上滚动"><Triangle dir="up" /></ScrollButton>
          <ScrollThumb $share={400} />
          <ScrollTrack $share={20} />
          <ScrollButton aria-label="向下滚动"><Triangle /></ScrollButton>
        </VScroll>
      </SheetArea>

      <SheetBar>
        <NavButton aria-label="上一个工作表"><Triangle dir="left" color="#bdbdbd" /></NavButton>
        <NavButton aria-label="下一个工作表"><Triangle dir="right" color="#bdbdbd" /></NavButton>
        <SheetTab>Sheet1</SheetTab>
        <AddSheet aria-label="新工作表"><AddIcon /></AddSheet>
        <Stretch />
        <Grip $w={32}><GripIcon /></Grip>
        <HScroll>
          <ScrollButton aria-label="向左滚动"><Triangle dir="left" /></ScrollButton>
          <ScrollThumb $share={287} />
          <ScrollTrack $share={58} />
          <ScrollButton aria-label="向右滚动"><Triangle dir="right" /></ScrollButton>
        </HScroll>
      </SheetBar>

      <StatusBar>
        <span>就绪</span>
        <Stretch />
        <Count>计数: 11</Count>
        <ViewButton $active aria-label="普通"><NormalViewIcon /></ViewButton>
        <ViewButton aria-label="页面布局"><PageLayoutIcon /></ViewButton>
        <ViewButton aria-label="分页预览"><PageBreakIcon /></ViewButton>
        <ZoomButton aria-label="缩小"><Icon w={9} h={9}><path d="M0 4.500h8" stroke="#444" /></Icon></ZoomButton>
        <ZoomRange type="range" min={0} max={200} defaultValue={100} aria-label="显示比例" />
        <ZoomButton aria-label="放大"><Icon w={9} h={9}><path d="M0 4.500h9M4.500 0v9" stroke="#444" /></Icon></ZoomButton>
        <ZoomValue>100%</ZoomValue>
      </StatusBar>
    </Window>
  );
}
